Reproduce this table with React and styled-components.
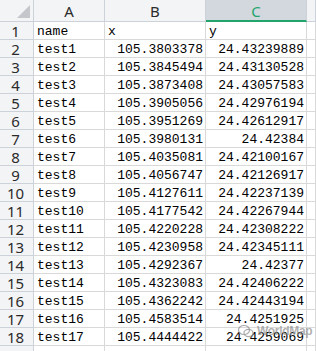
import React from "react";
import styled, { createGlobalStyle } from "styled-components";

const Global = createGlobalStyle`
  html, body { margin: 0; padding: 0; background: #ffffff; }
  body { overflow: hidden; }
`;

const rows = [
  ["name", "x", "y"],
  ["test1", "105.3803378", "24.43239889"],
  ["test2", "105.3845494", "24.43130528"],
  ["test3", "105.3873408", "24.43057583"],
  ["test4", "105.3905056", "24.42976194"],
  ["test5", "105.3951269", "24.42612917"],
  ["test6", "105.3980131", "24.42384"],
  ["test7", "105.4035081", "24.42100167"],
  ["test8", "105.4056747", "24.42126917"],
  ["test9", "105.4127611", "24.42237139"],
  ["test10", "105.4177542", "24.42267944"],
  ["test11", "105.4220228", "24.42308222"],
  ["test12", "105.4230958", "24.42345111"],
  ["test13", "105.4292367", "24.42377"],
  ["test14", "105.4323083", "24.42406222"],
  ["test15", "105.4362242", "24.42443194"],
  ["test16", "105.4583514", "24.4251925"],
  ["test17", "105.4444422", "24.4259069"],
  ["", "", ""],
];

const Sheet = styled.div`
  position: relative;
  width: 316px;
  height: 351px;
  overflow: hidden;
  display: grid;
  grid-template-columns: 34px 71px 101px 101px 1fr;
  grid-auto-rows: 18px;
  grid-template-rows: 22px;
  background: #fff;
`;

const HeadCell = styled.div`
  box-sizing: border-box;
  background: ${(p) => (p.$active ? "#d3d7de" : "#f3f4f6")};
  border-right: 1px solid #cdd2da;
  border-bottom: ${(p) => (p.$active ? "2px solid #22a56c" : "1px solid #cdd2da")};
  color: ${(p) => (p.$active ? "#22a56c" : "#2b2b2b")};
  font-family: "Noto Sans", "Liberation Sans", sans-serif;
  font-size: 15px;
  display: flex;
  align-items: center;
  justify-content: center;
  padding-top: 1px;
`;

const Corner = styled.div`
  box-sizing: border-box;
  position: relative;
  background: #f3f4f6;
  border-right: 1px solid #cdd2da;
  border-bottom: 1px solid #cdd2da;
`;

const CornerTri = styled.div`
  position: absolute;
  right: 3px;
  bottom: 3px;
  width: 0;
  height: 0;
  border-left: 13px solid transparent;
  border-bottom: 13px solid #c3c6cb;
`;

const RowHead = styled.div`
  box-sizing: border-box;
  background: #f3f4f6;
  border-right: 1px solid #cdd2da;
  border-bottom: 1px solid #cdd2da;
  color: #2b2b2b;
  font-family: "Noto Sans", "Liberation Sans", sans-serif;
  font-size: 15px;
  display: flex;
  align-items: center;
  justify-content: center;
  padding-right: 2px;
`;

const Cell = styled.div`
  box-sizing: border-box;
  border-right: 1px solid #d9d9d9;
  border-bottom: 1px solid #d9d9d9;
  font-family: "Liberation Mono", "DejaVu Sans Mono", monospace;
  font-size: 13px;
  color: #000;
  display: flex;
  align-items: center;
  justify-content: ${(p) => (p.$num ? "flex-end" : "flex-start")};
  padding: 1px 2px 0 3px;
  white-space: nowrap;
  overflow: hidden;
`;

const Watermark = styled.div`
  position: absolute;
  left: 238px;
  top: 324px;
  display: flex;
  align-items: center;
  gap: 3px;
  color: rgba(150, 150, 150, 0.75);
  font-family: "Liberation Sans", sans-serif;
  font-size: 12px;
  font-weight: bold;
  letter-spacing: -0.3px;
`;

const isNum = (s) => /^[0-9.]+$/.test(s);

export default function App() {
  return (
    <>
      <Global />
      <Sheet>
        <Corner>
          <CornerTri />
        </Corner>
        <HeadCell>A</HeadCell>
        <HeadCell>B</HeadCell>
        <HeadCell $active>C</HeadCell>
        <HeadCell />
        {rows.map((r, i) => (
          <React.Fragment key={i}>
            <RowHead>{i + 1}</RowHead>
            {r.map((v, j) => (
              <Cell key={j} $num={isNum(v)}>
                {v}
              </Cell>
            ))}
            <Cell />
          </React.Fragment>
        ))}
        <Watermark>
          <svg width="16" height="14" viewBox="0 0 16 14">
            <ellipse cx="6" cy="6" rx="5.5" ry="4.5" fill="none" stroke="rgba(150,150,150,0.8)" strokeWidth="1.2" />
            <ellipse cx="10.5" cy="9" rx="4.5" ry="3.6" fill="none" stroke="rgba(150,150,150,0.8)" strokeWidth="1.2" />
          </svg>
          WorldMap
        </Watermark>
      </Sheet>
    </>
  );
}
